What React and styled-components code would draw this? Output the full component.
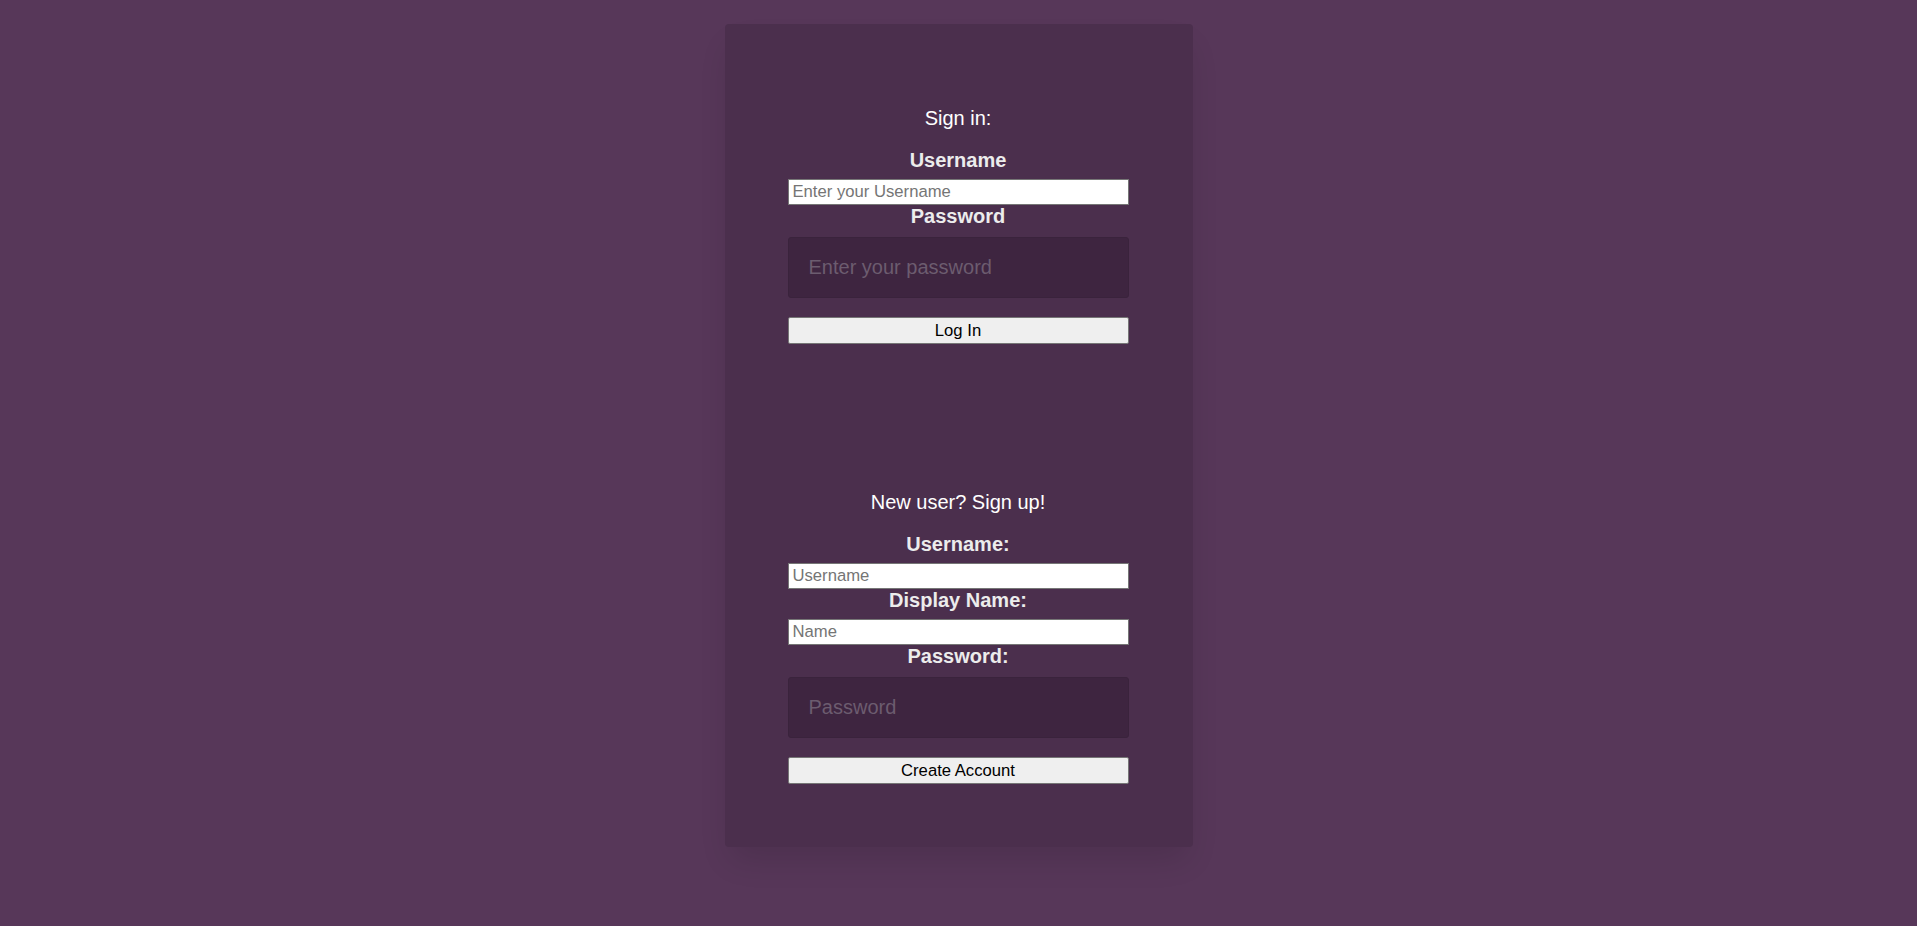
import React from "react";
import styled, { createGlobalStyle } from "styled-components";

const GlobalStyle = createGlobalStyle`
  body {
    margin: 0;
    background: #573759;
    font-family: "Liberation Sans", Arial, sans-serif;
  }
`;

const Page = styled.main`
  display: flex;
  justify-content: center;
  padding-top: 24px;
  min-height: 926px;
  box-sizing: border-box;
`;

const Card = styled.div`
  width: 468px;
  height: 823px;
  box-sizing: border-box;
  padding: 82px 64px 0 63px;
  background: #4b2f4d;
  border-radius: 4px;
  box-shadow: 0 18px 30px -6px rgba(0, 0, 0, 0.12);
  display: flex;
  flex-direction: column;
  gap: 146px;
`;

const Form = styled.form`
  display: flex;
  flex-direction: column;
  align-items: stretch;
`;

const Heading = styled.div`
  color: #ffffff;
  font-size: 20px;
  line-height: 23px;
  text-align: center;
  padding-top: 1px;
  margin-bottom: 19px;
`;

const Label = styled.label`
  display: block;
  color: #ececec;
  font-size: 20px;
  font-weight: bold;
  line-height: 23px;
  text-align: center;
  margin-bottom: ${(p) => (p.$big ? "9px" : "7px")};
`;

const TextInput = styled.input`
  height: 26px;
  box-sizing: border-box;
  margin: 0;
  padding: 0 4px;
  border: 1px solid #767676;
  background: #ffffff;
  font-family: inherit;
  font-size: 16.67px;
  color: #000;
  outline: none;

  &::placeholder {
    color: #757575;
  }
`;

const PasswordInput = styled.input`
  height: 61px;
  box-sizing: border-box;
  margin: 0 0 19px;
  padding: 0 20px;
  border: 1px solid #3a233c;
  border-radius: 3px;
  background: #3e2540;
  font-family: inherit;
  font-size: 20px;
  color: #fff;
  outline: none;

  &::placeholder {
    color: #6c5c6f;
  }
`;

const Button = styled.button`
  height: 27px;
  margin: 0;
  padding: 0;
  border: 1px solid #767676;
  border-radius: 2px;
  background: #efefef;
  font-family: inherit;
  font-size: 16.67px;
  color: #000;
`;

function SignIn() {
  return (
    <Form onSubmit={(e) => e.preventDefault()}>
      <Heading>Sign in:</Heading>
      <Label>Username</Label>
      <TextInput placeholder="Enter your Username" />
      <Label $big>Password</Label>
      <PasswordInput type="password" placeholder="Enter your password" />
      <Button>Log In</Button>
    </Form>
  );
}

function SignUp() {
  return (
    <Form onSubmit={(e) => e.preventDefault()}>
      <Heading>New user? Sign up!</Heading>
      <Label>Username:</Label>
      <TextInput placeholder="Username" />
      <Label>Display Name:</Label>
      <TextInput placeholder="Name" />
      <Label $big>Password:</Label>
      <PasswordInput type="password" placeholder="Password" />
      <Button>Create Account</Button>
    </Form>
  );
}

export default function App() {
  return (
    <>
      <GlobalStyle />
      <Page>
        <Card>
          <SignIn />
          <SignUp />
        </Card>
      </Page>
    </>
  );
}
